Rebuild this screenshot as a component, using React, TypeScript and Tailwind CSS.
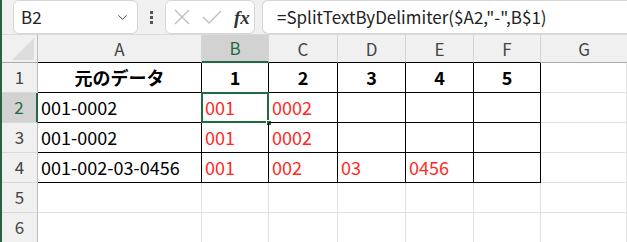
import { ChevronDown } from "lucide-react";

const COLS = ["A", "B", "C", "D", "E", "F", "G"];
const WIDTHS = ["w-[164px]", "w-[67px]", "w-[69px]", "w-[68px]", "w-[68px]", "w-[67px]", "flex-1"];

type Cell = { text?: string; kind?: "head" | "plain" | "red" };

const ROWS: Cell[][] = [
  [
    { text: "元のデータ", kind: "head" },
    { text: "1", kind: "head" },
    { text: "2", kind: "head" },
    { text: "3", kind: "head" },
    { text: "4", kind: "head" },
    { text: "5", kind: "head" },
    {},
  ],
  [{ text: "001-0002" }, { text: "001", kind: "red" }, { text: "0002", kind: "red" }, {}, {}, {}, {}],
  [{ text: "001-0002" }, { text: "001", kind: "red" }, { text: "0002", kind: "red" }, {}, {}, {}, {}],
  [
    { text: "001-002-03-0456" },
    { text: "001", kind: "red" },
    { text: "002", kind: "red" },
    { text: "03", kind: "red" },
    { text: "0456", kind: "red" },
    {},
    {},
  ],
  [{}, {}, {}, {}, {}, {}, {}],
  [{}, {}, {}, {}, {}, {}, {}],
];

function Toolbar() {
  return (
    <div className="h-[50px] flex items-center pl-[11px] bg-[#f0f0f0] border-b border-[#dadada]">
      {/* name box */}
      <div className="w-[125px] h-[34px] bg-white border border-[#d6d6d6] rounded-[6px] flex items-center justify-between pl-[7px] pr-[7px]">
        <span className="text-[17px] text-[#222]">B2</span>
        <ChevronDown size={15} strokeWidth={1.6} className="text-[#444]" />
      </div>
      {/* divider dots */}
      <div className="w-[27px] flex flex-col items-center gap-[2px]">
        <span className="w-[3px] h-[3px] bg-[#555]" />
        <span className="w-[3px] h-[3px] bg-[#555]" />
        <span className="w-[3px] h-[3px] bg-[#555]" />
      </div>
      {/* cancel / enter / fx */}
      <div className="w-[90px] h-[34px] bg-white border border-[#d6d6d6] rounded-[6px] flex items-center pl-[7px]">
        <svg width="18" height="18" viewBox="0 0 18 18" className="mr-[11px]">
          <path d="M2 2 L16 16 M16 2 L2 16" stroke="#bdbdbd" strokeWidth="1.3" fill="none" />
        </svg>
        <svg width="20" height="16" viewBox="0 0 20 16" className="mr-[12px]">
          <path d="M1 8 L7 14 L19 2" stroke="#bdbdbd" strokeWidth="1.3" fill="none" />
        </svg>
        <span className="text-[19px] italic font-bold text-[#333] font-['Liberation_Serif',serif] leading-none">fx</span>
      </div>
      {/* formula bar */}
      <div className="ml-[7px] flex-1 h-[34px] bg-white border border-[#d6d6d6] border-r-0 rounded-l-[6px] flex items-center pl-[14px]">
        <span className="text-[17px] text-[#222] whitespace-nowrap">=SplitTextByDelimiter($A2,"-",B$1)</span>
      </div>
    </div>
  );
}

function ColumnHeader() {
  return (
    <div className="flex h-[30px] bg-[#f0f0f0]">
      <div className="w-[36px] shrink-0 border-r border-[#bdbdbd] border-b border-b-[#ababab] flex items-end justify-end pr-[3px] pb-[2px]">
        <svg width="22" height="22" viewBox="0 0 22 22">
          <polygon points="22,0 22,22 0,22" fill="#dcdcdc" />
        </svg>
      </div>
      {COLS.map((c, i) => {
        const selected = c === "B";
        const inRange = i < 6;
        return (
          <div
            key={c}
            className={`${WIDTHS[i]} shrink-0 flex items-center justify-center text-[17px] ${
              selected
                ? "bg-[#d2d2d2] text-[#1e6b41] border-b-2 border-[#1e6b41]"
                : inRange
                  ? "text-[#444] border-b border-black"
                  : "text-[#444] border-b border-[#ababab]"
            } ${i < 6 ? "border-r border-r-[#d4d4d4]" : ""}`}
          >
            {c}
          </div>
        );
      })}
    </div>
  );
}

export default function App() {
  return (
    <div className="w-[627px] h-[242px] overflow-hidden flex bg-white font-['Noto_Sans_CJK_JP','Noto_Sans',sans-serif]">
      <div className="w-[2px] shrink-0 bg-[#2d5f42]" />
      <div className="flex-1 flex flex-col min-w-0">
        <Toolbar />
        <ColumnHeader />
        {ROWS.map((row, r) => {
          const rowSelected = r === 1;
          return (
            <div key={r} className="flex h-[30px] shrink-0">
              <div
                className={`w-[36px] shrink-0 flex items-center justify-center text-[17px] border-b border-[#d9d9d9] ${
                  rowSelected
                    ? "bg-[#d2d2d2] text-[#1e6b41] border-r-2 border-r-[#1e6b41]"
                    : "bg-[#f0f0f0] text-[#444] border-r border-r-[#bdbdbd]"
                }`}
              >
                {r + 1}
              </div>
              {row.map((cell, c) => {
                const inRange = r < 4 && c < 6;
                const selected = r === 1 && c === 1;
                return (
                  <div
                    key={c}
                    className={`${WIDTHS[c]} shrink-0 relative flex items-center whitespace-nowrap overflow-visible text-[18px] ${
                      inRange ? "border-r border-b border-black" : "border-r border-b border-[#e1e1e1]"
                    } ${cell.kind === "head" ? "justify-center font-bold text-black text-[17px]" : "pl-[3px]"} ${
                      cell.kind === "red" ? "text-[#ff2a1f]" : cell.kind === "head" ? "" : "text-black"
                    }`}
                  >
                    {cell.text}
                    {selected && (
                      <>
                        <div className="absolute -left-[1px] -top-[1px] -right-[1px] -bottom-[1px] border-2 border-[#1e6b41] pointer-events-none" />
                        <div className="absolute -right-[4px] -bottom-[4px] w-[6px] h-[6px] bg-[#1e6b41] border border-white" />
                      </>
                    )}
                  </div>
                );
              })}
            </div>
          );
        })}
      </div>
    </div>
  );
}
